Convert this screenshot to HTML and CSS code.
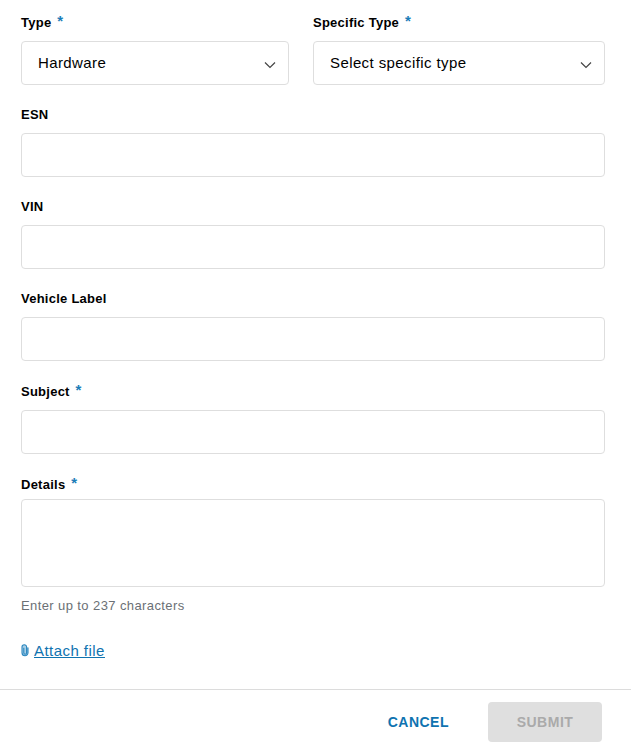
FILE: index.html
```html
<!DOCTYPE html>
<html lang="en">
<head>
    <meta charset="UTF-8">
    <meta name="viewport" content="width=device-width, initial-scale=1.0">
    <title>New Case</title>
    <link rel="stylesheet" href="styles.css">
</head>
<body>
    <form class="case-form">
        <div class="form-body">
            <div class="field-row">
                <div class="field field-type">
                    <label class="field-label required">Type <span class="star">*</span></label>
                    <div class="select-wrap">
                        <select class="control">
                            <option>Hardware</option>
                        </select>
                        <svg class="chevron" width="12" height="8" viewBox="0 0 12 8"><path d="M1 1.5l5 5 5-5" fill="none" stroke="#444" stroke-width="1.2"/></svg>
                    </div>
                </div>
                <div class="field field-specific">
                    <label class="field-label required">Specific Type <span class="star">*</span></label>
                    <div class="select-wrap">
                        <select class="control">
                            <option>Select specific type</option>
                        </select>
                        <svg class="chevron" width="12" height="8" viewBox="0 0 12 8"><path d="M1 1.5l5 5 5-5" fill="none" stroke="#444" stroke-width="1.2"/></svg>
                    </div>
                </div>
            </div>
            <div class="field">
                <label class="field-label">ESN</label>
                <input type="text" class="control">
            </div>
            <div class="field">
                <label class="field-label">VIN</label>
                <input type="text" class="control">
            </div>
            <div class="field">
                <label class="field-label">Vehicle Label</label>
                <input type="text" class="control">
            </div>
            <div class="field">
                <label class="field-label required">Subject <span class="star">*</span></label>
                <input type="text" class="control">
            </div>
            <div class="field">
                <label class="field-label required tight">Details <span class="star">*</span></label>
                <textarea class="control details"></textarea>
                <p class="hint">Enter up to 237 characters</p>
            </div>
            <a href="#" class="attach">
                <svg class="clip" width="8" height="13" viewBox="0 0 8 13"><path d="M7 3.6v5.2a3 3 0 0 1-6 0V3a2.3 2.3 0 0 1 4.6 0v5.8a1.4 1.4 0 0 1-2.8 0V3.8" fill="#a9cfe6" stroke="#2a86bf" stroke-width="1.1"/></svg>
                <span class="attach-text">Attach file</span>
            </a>
        </div>
        <div class="form-footer">
            <button type="button" class="btn-cancel">CANCEL</button>
            <button type="button" class="btn-submit" disabled>SUBMIT</button>
        </div>
    </form>
</body>
</html>
```

FILE: styles.css
```css
* {
    box-sizing: border-box;
}
body {
    margin: 0;
    background-color: #fff;
    font-family: "Liberation Sans", Arial, sans-serif;
    color: #000;
}
.form-body {
    padding: 13px 26px 0 21px;
}
.field-row {
    display: flex;
    gap: 24px;
}
.field {
    margin-bottom: 21px;
}
.field-type {
    width: 268px;
}
.field-specific {
    flex: 1;
}
.field-label {
    display: block;
    height: 18px;
    margin-bottom: 9px;
    font-size: 13px;
    font-weight: 700;
    line-height: 18px;
    letter-spacing: 0.25px;
    color: #000;
}
.field-label.required {
    height: 19px;
    line-height: 20px;
}
.field-label.tight {
    margin-bottom: 5px;
}
.star {
    position: relative;
    top: -1px;
    margin-left: 2px;
    font-size: 15px;
    font-weight: 700;
    line-height: 1;
    color: #1b7db8;
}
.select-wrap {
    position: relative;
}
.control {
    display: block;
    width: 100%;
    height: 44px;
    padding: 0 16px 2px;
    border: 1px solid #dedede;
    border-radius: 4px;
    background-color: #fff;
    font-family: inherit;
    font-size: 15px;
    letter-spacing: 0.4px;
    color: #000;
    appearance: none;
    outline: none;
}
.details {
    height: 88px;
    resize: none;
}
.chevron {
    position: absolute;
    right: 13px;
    top: 20px;
    pointer-events: none;
}
.hint {
    margin: 11px 0 0;
    font-size: 13px;
    line-height: 16px;
    letter-spacing: 0.4px;
    color: #6b7075;
}
.attach {
    display: flex;
    align-items: center;
    gap: 5px;
    margin-top: 27px;
    height: 18px;
    font-size: 15px;
    letter-spacing: 0.45px;
    color: #0f73b0;
}
.clip {
    flex: none;
}
.attach-text {
    text-decoration: underline;
}
.form-footer {
    display: flex;
    justify-content: flex-end;
    align-items: center;
    gap: 39px;
    margin-top: 30px;
    padding: 12px 29px 0 0;
    border-top: 1px solid #dcdcdc;
}
.btn-cancel, .btn-submit {
    border: none;
    font-family: inherit;
    font-size: 14px;
    font-weight: 700;
    letter-spacing: 0.5px;
}
.btn-cancel {
    padding: 0;
    background: none;
    color: #0f73b0;
    cursor: pointer;
}
.btn-submit {
    width: 114px;
    height: 40px;
    border-radius: 4px;
    background-color: #dfdfdf;
    color: #aaa;
}
```
